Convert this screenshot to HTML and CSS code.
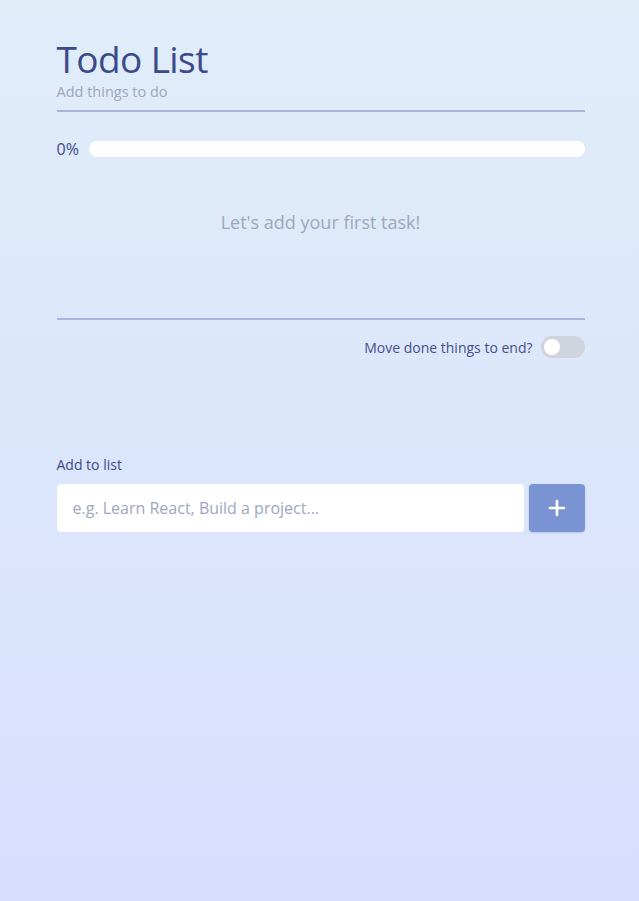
FILE: index.html
```html
<!DOCTYPE html>
<html>
<head>
<meta charset="utf-8">
<link rel="stylesheet" href="styles.css">
</head>
<body>
<main class="app">
  <header class="header">
    <h1 class="title">Todo List</h1>
    <p class="subtitle">Add things to do</p>
  </header>
  <div class="progress">
    <span class="pct">0%</span>
    <div class="bar"><div class="fill" style="width:0%"></div></div>
  </div>
  <div class="empty">Let's add your first task!</div>
  <div class="options">
    <span class="opt-label">Move done things to end?</span>
    <span class="toggle"><span class="knob"></span></span>
  </div>
  <form class="add">
    <label class="add-label">Add to list</label>
    <div class="add-row">
      <input class="add-input" type="text" placeholder="e.g. Learn React, Build a project...">
      <button class="add-btn" type="button">
        <svg width="18" height="18" viewBox="0 0 18 18"><path d="M9 2v14M2 9h14" stroke="#fff" stroke-width="2.6" stroke-linecap="round"/></svg>
      </button>
    </div>
  </form>
</main>
</body>
</html>
```
FILE: styles.css
```css
html, body { margin: 0; padding: 0; }
body {
  min-height: 901px;
  background: linear-gradient(to bottom, #e0edf9 0%, #d8dffe 100%);
  font-family: "Open Sans", "Noto Sans", sans-serif;
}
.app {
  width: 528px;
  margin: 0 auto;
  padding-top: 39px;
  position: relative;
  left: 1px;
}
.header {
  border-bottom: 2px solid #a9b4dc;
  padding-bottom: 8px;
}
.title {
  margin: 0;
  font-weight: 400;
  font-size: 37px;
  line-height: 40px;
  color: #3d4a8a;
  letter-spacing: -0.6px;
}
.subtitle {
  margin: 3px 0 0;
  font-size: 14.5px;
  line-height: 20px;
  color: #a0a4ba;
}
.progress {
  display: flex;
  align-items: center;
  gap: 8px;
  margin-top: 20px;
}
.pct {
  font-size: 16px;
  color: #3d4a8a;
  line-height: 34px;
  min-width: 24px;
}
.bar {
  flex: 1;
  height: 16px;
  background: #fff;
  border-radius: 8px;
  overflow: hidden;
}
.fill { height: 100%; background: #7a93d3; }
.empty {
  text-align: center;
  font-size: 18px;
  color: #a0a6bd;
  padding: 43px 0 0;
  height: 109px;
  border-bottom: 2px solid #a9b4dc;
  line-height: 26px;
}
.options {
  display: flex;
  justify-content: flex-end;
  align-items: center;
  gap: 8px;
  margin-top: 16px;
}
.opt-label {
  font-size: 14px;
  color: #474f8c;
}
.toggle {
  width: 44px;
  height: 22px;
  border-radius: 11px;
  background: #d0d4dd;
  display: flex;
  align-items: center;
  padding: 0 3px;
  box-sizing: border-box;
}
.knob {
  width: 16px;
  height: 16px;
  border-radius: 50%;
  background: #fff;
}
.add { margin-top: 97px; display: block; }
.add-label {
  display: block;
  font-size: 14px;
  color: #3d4a8a;
  line-height: 20px;
  margin-bottom: 9px;
}
.add-row { display: flex; gap: 5px; }
.add-input {
  flex: 1;
  height: 48px;
  box-sizing: border-box;
  border: none;
  border-radius: 4px;
  background: #fff;
  padding: 0 16px;
  font-family: inherit;
  font-size: 16px;
  color: #3d4a8a;
  outline: none;
}
.add-input::placeholder { color: #a0a6bd; }
.add-btn {
  width: 56px;
  height: 48px;
  border: none;
  border-radius: 4px;
  background: #7a93d3;
  display: flex;
  align-items: center;
  justify-content: center;
  padding: 0;
  box-shadow: 0 1px 2px rgba(60,70,120,0.2);
}
```
